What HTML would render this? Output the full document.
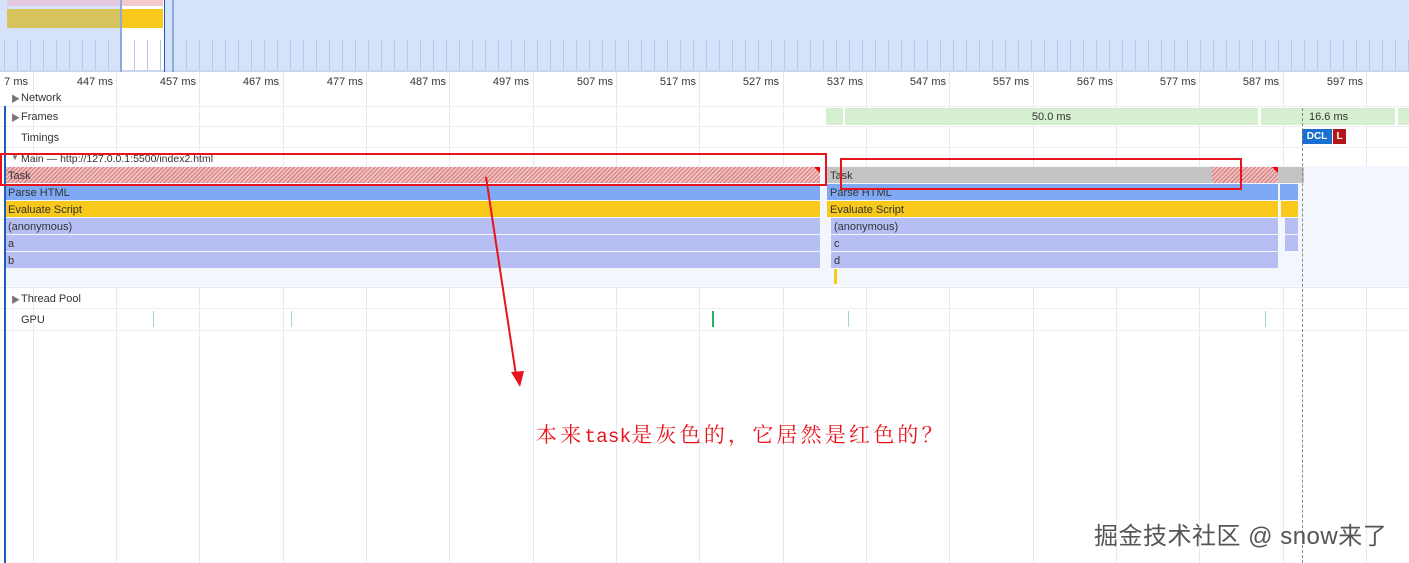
<!DOCTYPE html><html><head><meta charset="utf-8"><style>
body{margin:0;width:1409px;height:563px;overflow:hidden;background:#fff;position:relative;font-family:"Liberation Sans","Noto Sans CJK SC",sans-serif;font-size:11px;color:#222}
div{position:absolute;box-sizing:border-box}
.g{top:72px;bottom:0;width:1px;background:#e6eaf0}
.lbl{top:76px;font-size:11px;color:#333;text-align:right;width:60px}
.row{left:0;right:0;border-bottom:1px solid #eee}
.t{left:21px;font-size:11px;color:#333}
.bar{height:16px;line-height:18px;padding-left:3px;font-size:11px;color:#333;white-space:nowrap;overflow:hidden}
.hatch{background:repeating-linear-gradient(135deg,#d88 0 1.5px,#f0c8c8 1.5px 3px)}
.tri{width:0;height:0;border-left:6px solid transparent;border-top:6px solid #e00}
</style></head><body>
<div style="left:0;top:0;width:1409px;height:72px;background:#d5e2fa"></div>
<div style="left:121px;top:0;width:44px;height:72px;background:#fff"></div>
<div style="left:7px;top:0;width:114px;height:6px;background:#e2c9e0"></div>
<div style="left:121px;top:0;width:42px;height:6px;background:#f5caca"></div>
<div style="left:7px;top:9px;width:114px;height:19px;background:#d8c45c"></div>
<div style="left:121px;top:9px;width:42px;height:19px;background:#f8c81a"></div>
<div style="left:4px;top:40px;width:1405px;height:32px;background:repeating-linear-gradient(90deg,#b8c8e8 0 1px,transparent 1px 13px)"></div>
<div style="left:0;top:70px;width:1409px;height:2px;background:#c9d6ee"></div>
<div style="left:120px;top:0;width:2px;height:72px;background:#8aaae0"></div>
<div style="left:164px;top:0;width:1px;height:72px;background:#1a5fc0"></div>
<div style="left:172px;top:0;width:2px;height:72px;background:#8aaae0"></div>
<div class="g" style="left:33px"></div><div class="g" style="left:116px"></div><div class="g" style="left:199px"></div><div class="g" style="left:283px"></div><div class="g" style="left:366px"></div><div class="g" style="left:449px"></div><div class="g" style="left:533px"></div><div class="g" style="left:616px"></div><div class="g" style="left:699px"></div><div class="g" style="left:783px"></div><div class="g" style="left:866px"></div><div class="g" style="left:949px"></div><div class="g" style="left:1033px"></div><div class="g" style="left:1116px"></div><div class="g" style="left:1199px"></div><div class="g" style="left:1283px"></div><div class="g" style="left:1366px"></div>
<div class="lbl" style="left:-32px">7 ms</div>
<div class="lbl" style="left:53px">447 ms</div><div class="lbl" style="left:136px">457 ms</div><div class="lbl" style="left:219px">467 ms</div><div class="lbl" style="left:303px">477 ms</div><div class="lbl" style="left:386px">487 ms</div><div class="lbl" style="left:469px">497 ms</div><div class="lbl" style="left:553px">507 ms</div><div class="lbl" style="left:636px">517 ms</div><div class="lbl" style="left:719px">527 ms</div><div class="lbl" style="left:803px">537 ms</div><div class="lbl" style="left:886px">547 ms</div><div class="lbl" style="left:969px">557 ms</div><div class="lbl" style="left:1053px">567 ms</div><div class="lbl" style="left:1136px">577 ms</div><div class="lbl" style="left:1219px">587 ms</div><div class="lbl" style="left:1303px">597 ms</div>
<div class="row" style="top:88px;height:19px"></div>
<div style="left:11px;top:92px;font-size:9px;color:#777">▶</div><div class="t" style="top:92px">Network</div>
<div class="row" style="top:107px;height:20px"></div>
<div style="left:11px;top:111px;font-size:9px;color:#777">▶</div><div class="t" style="top:111px">Frames</div>
<div style="left:826px;top:108px;width:17px;height:17px;background:#d5efd0"></div>
<div style="left:845px;top:108px;width:413px;height:17px;background:#d5efd0;text-align:center;line-height:18px;color:#333">50.0 ms</div>
<div style="left:1261px;top:108px;width:134px;height:17px;background:#d5efd0"></div>
<div style="left:1309px;top:111px;color:#333">16.6 ms</div>
<div style="left:1398px;top:108px;width:11px;height:17px;background:#d5efd0"></div>
<div class="t" style="top:132px">Timings</div>
<div style="left:1302px;top:129px;width:30px;height:15px;background:#1a6fd0;color:#fff;font-weight:bold;font-size:10px;text-align:center;line-height:15px">DCL</div>
<div style="left:1333px;top:129px;width:13px;height:15px;background:#b0161a;color:#fff;font-weight:bold;font-size:10px;text-align:center;line-height:15px">L</div>
<div style="left:0;top:147px;width:1409px;height:1px;background:#eee"></div>
<div style="left:11px;top:153px;font-size:8px;color:#777">▼</div><div class="t" style="top:153px;font-size:10.5px">Main — http://127.0.0.1:5500/index2.html</div>
<div style="left:4px;top:166px;width:1405px;height:120px;background:#f3f6fc"></div>
<div class="bar hatch" style="left:5px;top:167px;width:815px">Task</div>
<div class="tri" style="left:814px;top:167px"></div>
<div class="bar" style="left:827px;top:167px;width:385px;background:#c4c4c4">Task</div>
<div class="bar hatch" style="left:1212px;top:167px;width:66px"></div>
<div class="tri" style="left:1272px;top:167px"></div>
<div class="bar" style="left:1278px;top:167px;width:26px;background:#c4c4c4"></div>
<div class="bar" style="left:5px;top:184px;width:815px;background:#7fa9f4">Parse HTML</div>
<div class="bar" style="left:827px;top:184px;width:451px;background:#7fa9f4">Parse HTML</div>
<div class="bar" style="left:1280px;top:184px;width:18px;background:#7fa9f4"></div>
<div class="bar" style="left:5px;top:201px;width:815px;background:#f8c81a">Evaluate Script</div>
<div class="bar" style="left:827px;top:201px;width:451px;background:#f8c81a">Evaluate Script</div>
<div class="bar" style="left:1281px;top:201px;width:17px;background:#f8c81a"></div>
<div class="bar" style="left:5px;top:218px;width:815px;background:#b6bef4">(anonymous)</div>
<div class="bar" style="left:831px;top:218px;width:447px;background:#b6bef4">(anonymous)</div>
<div class="bar" style="left:1285px;top:218px;width:13px;background:#b6bef4"></div>
<div class="bar" style="left:5px;top:235px;width:815px;background:#b6bef4">a</div>
<div class="bar" style="left:831px;top:235px;width:447px;background:#b6bef4">c</div>
<div class="bar" style="left:1285px;top:235px;width:13px;background:#b6bef4"></div>
<div class="bar" style="left:5px;top:252px;width:815px;background:#b6bef4">b</div>
<div class="bar" style="left:831px;top:252px;width:447px;background:#b6bef4">d</div>
<div style="left:834px;top:269px;width:3px;height:15px;background:#f8c81a"></div>
<div style="left:0;top:287px;width:1409px;height:1px;background:#e3e8f0"></div>
<div style="left:11px;top:293px;font-size:9px;color:#777">▶</div><div class="t" style="top:293px">Thread Pool</div>
<div style="left:0;top:308px;width:1409px;height:1px;background:#eee"></div>
<div class="t" style="top:314px">GPU</div>
<div style="left:0;top:330px;width:1409px;height:1px;background:#eee"></div>
<div style="left:153px;top:311px;width:1px;height:16px;background:#a8d8b8"></div>
<div style="left:291px;top:311px;width:1px;height:16px;background:#a8d8b8"></div>
<div style="left:712px;top:311px;width:2px;height:16px;background:#2cb35a"></div>
<div style="left:848px;top:311px;width:1px;height:16px;background:#a8d8b8"></div>
<div style="left:1265px;top:311px;width:1px;height:16px;background:#a8d8b8"></div>
<div style="left:4px;top:106px;width:2px;height:457px;background:#1a5fc0"></div>
<div style="left:1302px;top:108px;width:0;height:455px;border-left:1px dashed #888"></div>
<div style="left:0;top:153px;width:827px;height:33px;border:2px solid #e8141c"></div>
<div style="left:840px;top:158px;width:402px;height:32px;border:2px solid #e8141c"></div>
<svg style="position:absolute;left:0;top:0" width="1409" height="563"><line x1="486" y1="177" x2="516" y2="375" stroke="#e8141c" stroke-width="2"/><polygon points="511,372 524,371 520,387" fill="#e8141c"/></svg>
<div style="left:536px;top:419px;font-family:'Noto Serif CJK SC',serif;font-size:21px;letter-spacing:3.2px;color:#e8141c;white-space:nowrap">本来<span style="font-family:'Liberation Mono',monospace;font-size:19.5px;letter-spacing:0">task</span>是灰色的，它居然是红色的？</div>
<div style="left:1094px;top:516px;font-size:24px;letter-spacing:0.5px;color:#555;white-space:nowrap">掘金技术社区 @ snow来了</div>
</body></html>
